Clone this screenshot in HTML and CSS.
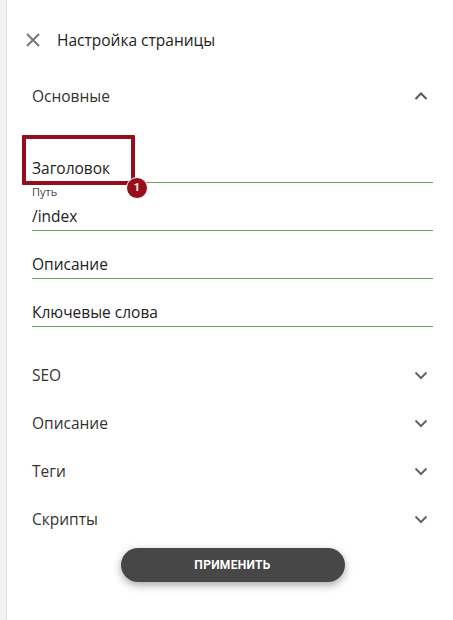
FILE: index.html
```html
<!DOCTYPE html>
<html lang="ru">
<head>
  <meta charset="UTF-8" />
  <title>Настройка страницы</title>
  <link rel="stylesheet" href="styles.css">
</head>
<body>
  <div class="rail"></div>

  <div class="panel">
    <header class="panel-head">
      <button class="close-btn" aria-label="Закрыть">
        <svg width="16" height="16" viewBox="0 0 16 16"><path d="M2 2L14 14M14 2L2 14" stroke="#777" stroke-width="2" fill="none"/></svg>
      </button>
      <h1>Настройка страницы</h1>
    </header>

    <section class="group open">
      <div class="group-head">
        <span>Основные</span>
        <svg class="chevron" width="24" height="24" viewBox="0 0 24 24"><path d="M6.5 15L12 9.5 17.5 15" stroke="#555" stroke-width="2" fill="none"/></svg>
      </div>
      <div class="fields">
        <div class="field marked">
          <span class="value">Заголовок</span>
          <div class="mark-box"></div>
          <div class="mark-badge">1</div>
        </div>
        <div class="field">
          <span class="label">Путь</span>
          <span class="value">/index</span>
        </div>
        <div class="field">
          <span class="value">Описание</span>
        </div>
        <div class="field">
          <span class="value">Ключевые слова</span>
        </div>
      </div>
    </section>

    <section class="group">
      <div class="group-head">
        <span>SEO</span>
        <svg class="chevron" width="24" height="24" viewBox="0 0 24 24"><path d="M6.5 9.5L12 15 17.5 9.5" stroke="#666" stroke-width="2" fill="none"/></svg>
      </div>
    </section>
    <section class="group">
      <div class="group-head">
        <span>Описание</span>
        <svg class="chevron" width="24" height="24" viewBox="0 0 24 24"><path d="M6.5 9.5L12 15 17.5 9.5" stroke="#666" stroke-width="2" fill="none"/></svg>
      </div>
    </section>
    <section class="group">
      <div class="group-head">
        <span>Теги</span>
        <svg class="chevron" width="24" height="24" viewBox="0 0 24 24"><path d="M6.5 9.5L12 15 17.5 9.5" stroke="#666" stroke-width="2" fill="none"/></svg>
      </div>
    </section>
    <section class="group">
      <div class="group-head">
        <span>Скрипты</span>
        <svg class="chevron" width="24" height="24" viewBox="0 0 24 24"><path d="M6.5 9.5L12 15 17.5 9.5" stroke="#666" stroke-width="2" fill="none"/></svg>
      </div>
    </section>

    <button class="apply-btn">ПРИМЕНИТЬ</button>
  </div>
</body>
</html>
```

FILE: styles.css
```css
body {
  margin: 0;
  font-family: "Open Sans", Arial, sans-serif;
  color: #2b2b2b;
  background: #fff;
  display: flex;
  min-height: 620px;
}
.rail {
  width: 6px;
  background: #f2f2f2;
  border-right: 1px solid #e2e2e2;
}
.panel {
  flex: 1;
  padding: 16px 20px 0 25px;
}
.panel-head {
  height: 48px;
  display: flex;
  align-items: center;
  margin: 0 0 8px -7px;
}
.close-btn {
  border: none;
  background: none;
  padding: 0;
  width: 16px;
  height: 16px;
  display: flex;
  cursor: pointer;
}
.panel-head h1 {
  margin: 0 0 0 16px;
  font-size: 15.5px;
  font-weight: normal;
  color: #222;
}
.group-head {
  height: 48px;
  display: flex;
  align-items: center;
  justify-content: space-between;
  font-size: 15.5px;
  color: #333;
}
.group.open .fields {
  padding: 15px 0 24px;
}
.field {
  height: 48px;
  box-sizing: border-box;
  display: flex;
  flex-direction: column;
  justify-content: flex-end;
  padding-bottom: 4px;
  border-bottom: 1px solid #6f9a5f;
}
.field .value {
  font-size: 15.5px;
  line-height: 20px;
  color: #222;
}
.field .label {
  font-size: 11px;
  line-height: 13px;
  margin-bottom: 8px;
  color: #444;
}
.marked {
  position: relative;
}
.mark-box {
  position: absolute;
  left: -10px;
  top: 0;
  width: 113px;
  height: 50px;
  box-sizing: border-box;
  border: 4px solid #980d1c;
  border-radius: 1px;
}
.mark-badge {
  position: absolute;
  left: 94px;
  top: 42px;
  width: 22px;
  height: 22px;
  box-sizing: border-box;
  border: 1px solid #fff;
  border-radius: 50%;
  background: #980d1c;
  color: #fff;
  font-family: Roboto, Arial, sans-serif;
  font-size: 11px;
  font-weight: bold;
  line-height: 20px;
  text-align: center;
}
.apply-btn {
  display: block;
  width: 224px;
  height: 34px;
  margin: 5px auto 0;
  border: none;
  border-radius: 17px;
  background: #474747;
  color: #fff;
  font-family: Roboto, Arial, sans-serif;
  font-size: 12px;
  font-weight: bold;
  letter-spacing: 0.3px;
  box-shadow: 0 3px 8px rgba(0,0,0,0.35);
  cursor: pointer;
}
```
